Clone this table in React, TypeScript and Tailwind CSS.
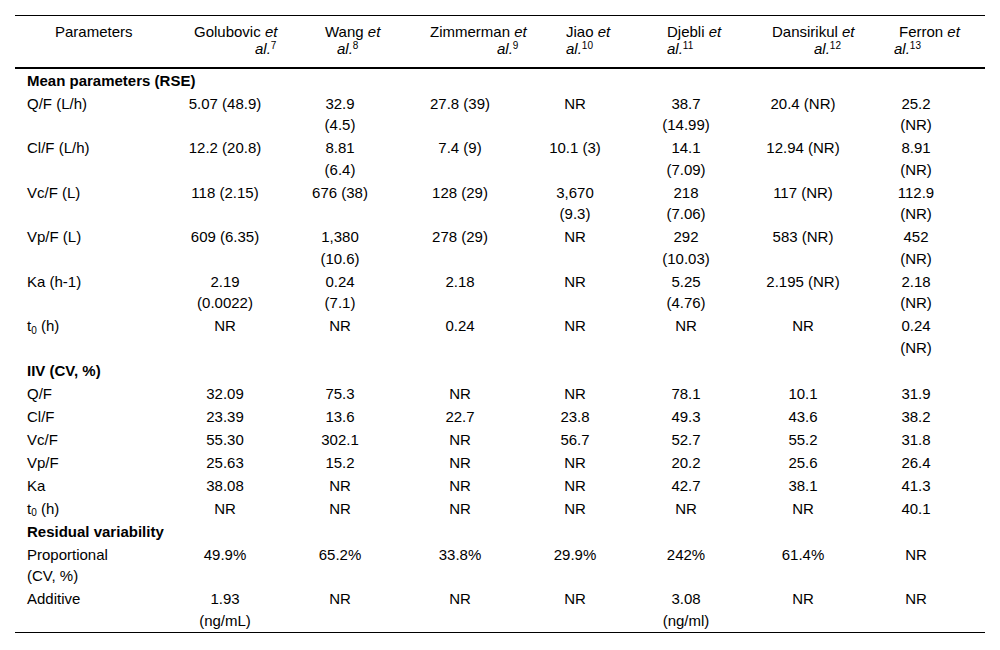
import React from "react";

type Cell = string | string[];
type Row = { label: React.ReactNode; labelLines?: number; cells: Cell[] } | { section: string };

const T0 = (
  <span>
    t<sub className="text-[10px]">0</sub> (h)
  </span>
);

const rows: Row[] = [
  { section: "Mean parameters (RSE)" },
  { label: "Q/F (L/h)", cells: ["5.07 (48.9)", ["32.9", "(4.5)"], "27.8 (39)", "NR", ["38.7", "(14.99)"], "20.4 (NR)", ["25.2", "(NR)"]] },
  { label: "Cl/F (L/h)", cells: ["12.2 (20.8)", ["8.81", "(6.4)"], "7.4 (9)", "10.1 (3)", ["14.1", "(7.09)"], "12.94 (NR)", ["8.91", "(NR)"]] },
  { label: "Vc/F (L)", cells: ["118 (2.15)", "676 (38)", "128 (29)", ["3,670", "(9.3)"], ["218", "(7.06)"], "117 (NR)", ["112.9", "(NR)"]] },
  { label: "Vp/F (L)", cells: ["609 (6.35)", ["1,380", "(10.6)"], "278 (29)", "NR", ["292", "(10.03)"], "583 (NR)", ["452", "(NR)"]] },
  { label: "Ka (h-1)", cells: [["2.19", "(0.0022)"], ["0.24", "(7.1)"], "2.18", "NR", ["5.25", "(4.76)"], "2.195 (NR)", ["2.18", "(NR)"]] },
  { label: T0, cells: ["NR", "NR", "0.24", "NR", "NR", "NR", ["0.24", "(NR)"]] },
  { section: "IIV (CV, %)" },
  { label: "Q/F", cells: ["32.09", "75.3", "NR", "NR", "78.1", "10.1", "31.9"] },
  { label: "Cl/F", cells: ["23.39", "13.6", "22.7", "23.8", "49.3", "43.6", "38.2"] },
  { label: "Vc/F", cells: ["55.30", "302.1", "NR", "56.7", "52.7", "55.2", "31.8"] },
  { label: "Vp/F", cells: ["25.63", "15.2", "NR", "NR", "20.2", "25.6", "26.4"] },
  { label: "Ka", cells: ["38.08", "NR", "NR", "NR", "42.7", "38.1", "41.3"] },
  { label: T0, cells: ["NR", "NR", "NR", "NR", "NR", "NR", "40.1"] },
  { section: "Residual variability" },
  {
    label: (
      <>
        <div>Proportional</div>
        <div>(CV, %)</div>
      </>
    ),
    cells: ["49.9%", "65.2%", "33.8%", "29.9%", "242%", "61.4%", "NR"],
  },
  { label: "Additive", cells: [["1.93", "(ng/mL)"], "NR", "NR", "NR", ["3.08", "(ng/ml)"], "NR", "NR"] },
];

const grid = "grid grid-cols-[155px_110px_120px_120px_110px_112px_122px_104px] pr-[17px]";

function Head({ a, sup, pa, pb }: { a: string; sup: string; pa: string; pb: string }) {
  return (
    <div className="whitespace-nowrap">
      <div className={pa}>
        {a} <i>et</i>
      </div>
      <div className={pb}>
        <i>al.</i>
        <sup className="text-[10px]">{sup}</sup>
      </div>
    </div>
  );
}

export default function App() {
  return (
    <div
      className="w-[1000px] h-[650px] bg-white text-black pt-[15px] px-[15px]"
      style={{ fontFamily: '"Liberation Sans", Arial, sans-serif' }}
    >
      <div className="border-t border-black">
        <div className={`${grid} h-[53px] pt-[7px] text-[15px] leading-[17px] border-b-2 border-black`}>
          <div className="pl-[40px]">Parameters</div>
          <Head a="Golubovic" sup="7" pa="pl-[24px]" pb="pl-[85px]" />
          <Head a="Wang" sup="8" pa="pl-[45px]" pb="pl-[57px]" />
          <Head a="Zimmerman" sup="9" pa="pl-[30px]" pb="pl-[97px]" />
          <Head a="Jiao" sup="10" pa="pl-[46px]" pb="pl-[46px]" />
          <Head a="Djebli" sup="11" pa="pl-[37px]" pb="pl-[37px]" />
          <Head a="Dansirikul" sup="12" pa="pl-[30px]" pb="pl-[72px]" />
          <Head a="Ferron" sup="13" pa="pl-[35px]" pb="pl-[30px]" />
        </div>
        <div className="border-b border-black text-[15px] leading-[21.5px]">
          {rows.map((r, i) =>
            "section" in r ? (
              <div key={i} className="py-[0.75px] pl-[12px] font-bold">
                {r.section}
              </div>
            ) : (
              <div key={i} className={`${grid} py-[0.75px]`}>
                <div className="pl-[12px] whitespace-nowrap">{r.label}</div>
                {r.cells.map((c, j) => (
                  <div key={j} className="text-center whitespace-nowrap">
                    {Array.isArray(c) ? c.map((l, k) => <div key={k}>{l}</div>) : c}
                  </div>
                ))}
              </div>
            )
          )}
        </div>
      </div>
    </div>
  );
}
